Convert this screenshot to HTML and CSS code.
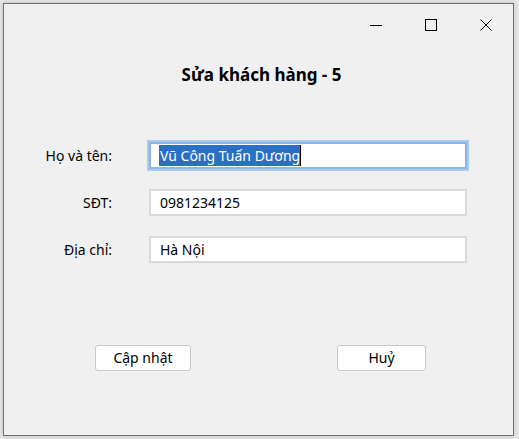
FILE: index.html
```html
<!DOCTYPE html>
<html lang="vi">
<head>
<meta charset="utf-8">
<link rel="stylesheet" href="styles.css">
</head>
<body>
<div class="window">
  <div class="titlebar">
    <div class="ctl">
      <svg width="12" height="12" viewBox="0 0 12 12"><path d="M0 6.5h12" stroke="#000" stroke-width="1"/></svg>
    </div>
    <div class="ctl">
      <svg width="12" height="12" viewBox="0 0 12 12"><rect x="0.5" y="0.5" width="11" height="11" fill="none" stroke="#000" stroke-width="1"/></svg>
    </div>
    <div class="ctl">
      <svg width="12" height="12" viewBox="0 0 12 12"><path d="M0.5 0.5L11.5 11.5M11.5 0.5L0.5 11.5" stroke="#000" stroke-width="1"/></svg>
    </div>
  </div>
  <div class="heading">Sửa khách hàng - 5</div>
  <div class="form">
    <label class="lbl">Họ và tên:</label>
    <div class="field focus"><span class="sel">Vũ Công Tuấn Dương</span><span class="caret"></span></div>
    <label class="lbl">SĐT:</label>
    <div class="field">0981234125</div>
    <label class="lbl">Địa chỉ:</label>
    <div class="field">Hà Nội</div>
  </div>
  <div class="actions">
    <div class="btn btn-update">Cập nhật</div>
    <div class="btn btn-cancel">Huỷ</div>
  </div>
</div>
</body>
</html>
```
FILE: styles.css
```css
html, body {
  margin: 0;
  padding: 0;
}
body {
  background: #e6e6e6;
  width: 519px;
  height: 439px;
  overflow: hidden;
  font-family: "Noto Sans", "Open Sans", sans-serif;
  font-size: 14px;
  color: #000;
}
.window {
  box-sizing: border-box;
  margin: 3px 0 0 3px;
  width: 511px;
  height: 433px;
  border: 1px solid #6f6f6f;
  background: #f0f0f0;
  box-shadow: 0 0 4px rgba(0,0,0,0.18);
  display: flex;
  flex-direction: column;
}
.titlebar {
  height: 39px;
  display: flex;
  justify-content: flex-end;
}
.ctl {
  width: 55px;
  height: 39px;
  display: flex;
  align-items: center;
  justify-content: center;
}
.ctl svg { display: block; margin-top: 3px; }
.heading {
  margin-top: 22px;
  height: 20px;
  line-height: 20px;
  text-align: center;
  font-weight: bold;
  font-size: 17px;
  padding-left: 6px;
}
.form {
  margin-top: 57px;
  display: grid;
  grid-template-columns: 108px 318px;
  column-gap: 37px;
  row-gap: 20px;
  align-items: center;
}
.lbl {
  text-align: right;
  line-height: 27px;
}
.field {
  box-sizing: border-box;
  height: 27px;
  background: #fff;
  border: 2px solid #d9d9d9;
  padding-left: 9px;
  line-height: 23px;
  display: flex;
  align-items: center;
}
.field.focus {
  border-color: #8ab8e6;
  box-shadow: 0 0 0 2px #a8cbef;
  padding-left: 8px;
}
.sel {
  background: #2a6fc2;
  color: #fff;
  line-height: 21px;
  padding-left: 1px;
}
.caret {
  width: 1px;
  height: 21px;
  background: #000;
}
.actions {
  margin-top: 82px;
  display: flex;
}
.btn {
  box-sizing: border-box;
  height: 26px;
  background: #fff;
  border: 1px solid #c9c9c9;
  border-radius: 3px;
  text-align: center;
  line-height: 24px;
}
.btn-update {
  width: 96px;
  margin-left: 91px;
}
.btn-cancel {
  width: 89px;
  margin-left: 146px;
}
```
